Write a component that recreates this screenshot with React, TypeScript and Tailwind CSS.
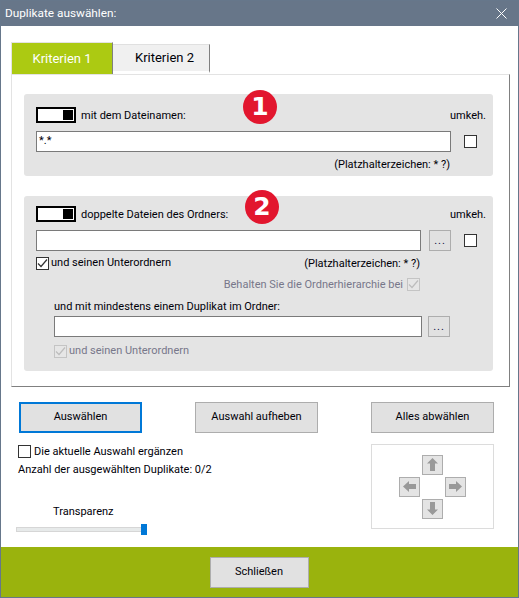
import type { ReactNode } from "react";

function Toggle() {
  return (
    <span className="flex h-4 w-10 shrink-0 items-center justify-end border-2 border-black bg-white pr-[1px]">
      <span className="h-[10px] w-[10px] bg-black" />
    </span>
  );
}

function Box({ checked, disabled, className = "" }: { checked?: boolean; disabled?: boolean; className?: string }) {
  return (
    <span className={`flex h-[13px] w-[13px] shrink-0 items-center justify-center border ${disabled ? "border-[#c4c4c4] bg-[#e6e6e6]" : "border-[#333] bg-white"} ${className}`}>
      {checked && (
        <svg width="11" height="11" viewBox="0 0 11 11" fill="none">
          <path d="M1 5.5 L4 8.5 L10 1.5" stroke={disabled ? "#bdbdbd" : "#333"} strokeWidth="1.2" />
        </svg>
      )}
    </span>
  );
}

function Input({ w, value }: { w: string; value?: string }) {
  return (
    <div className={`h-[21px] border border-[#7a7a7a] bg-white pl-[2px] leading-[17px] ${w}`}>{value}</div>
  );
}

function Dots() {
  return (
    <div className="flex h-[21px] w-[22px] items-center justify-center border border-[#adadad] bg-[#e1e1e1] pt-[2px] tracking-[1px] text-[#101040]">
      ...
    </div>
  );
}

function Badge({ n, className }: { n: string; className: string }) {
  return (
    <span className={`absolute flex h-[34px] w-[34px] items-center justify-center rounded-full bg-[#e2162e] font-['DejaVu_Sans',sans-serif] text-[25px] font-bold text-white ${className}`}>
      {n}
    </span>
  );
}

function Btn({ children, w, focused }: { children: ReactNode; w: string; focused?: boolean }) {
  return (
    <div className={`flex h-[31px] items-center justify-center bg-[#e1e1e1] ${focused ? "border-2 border-[#0078d7]" : "border border-[#adadad]"} ${w}`}>
      {children}
    </div>
  );
}

function Arrow({ d }: { d: string }) {
  return (
    <div className="flex h-5 w-[21px] items-center justify-center border border-[#adadad] bg-[#e4e4e4]">
      <svg width="15" height="15" viewBox="0 0 15 15">
        <path d={d} fill="#999999" />
      </svg>
    </div>
  );
}

export default function App() {
  return (
    <div className="flex h-[598px] w-[519px] flex-col overflow-hidden border border-[#66778b] bg-white font-['Roboto',sans-serif] text-[11px] text-[#000008]">
      <div className="flex h-[25px] shrink-0 items-center justify-between bg-[#677689] pl-[4px] pr-[11px] text-[11.8px] text-white">
        <span>Duplikate auswählen:</span>
        <svg width="11" height="11" viewBox="0 0 11 11" fill="none">
          <path d="M0.5 0.5 L10.5 10.5 M10.5 0.5 L0.5 10.5" stroke="#fff" strokeWidth="1" />
        </svg>
      </div>

      <div className="flex-1 pl-[10px] pt-[16px]">
        <div className="flex h-[32px] items-end text-[13px]">
          <div className="flex h-[32px] w-[102px] items-center justify-center border-l border-r border-t border-[#e3e3e3] border-r-[#808080] bg-[#acca12] text-white">
            Kriterien 1
          </div>
          <div className="mb-px flex h-[29px] w-[97px] items-center justify-center border-b-2 border-r border-t border-[#e0e0e0] border-b-white border-r-[#808080] bg-[#f0f0f0] pb-[1px] pl-[7px]">
            Kriterien 2
          </div>
        </div>

        <div className="h-[313px] w-[499px] border border-[#e3e3e3] border-b-[#808080] border-r-[#808080] px-[12px] pt-[19px]">
          <div className="relative h-[82px] w-[469px] rounded-[3px] bg-[#e4e4e4] pl-3 pr-[7px] pt-[13px]">
            <Badge n="1" className="left-[219px] top-[-4px]" />
            <div className="flex h-4 items-center gap-[5px]">
              <Toggle />
              <span className="flex-1 pt-[2px]">mit dem Dateinamen:</span>
              <span className="pt-[3px]">umkeh.</span>
            </div>
            <div className="mt-2 flex items-center">
              <Input w="w-[415px]" value="*.*" />
              <Box className="ml-[13px]" />
            </div>
            <div className="mt-[5px] pr-[36px] text-right">(Platzhalterzeichen: * ?)</div>
          </div>

          <div className="relative mt-5 h-[175px] w-[469px] rounded-[3px] bg-[#e4e4e4] pl-3 pr-[7px] pt-[10px]">
            <Badge n="2" className="left-[221px] top-[-6px]" />
            <div className="flex h-4 items-center gap-[5px]">
              <Toggle />
              <span className="flex-1 pt-[2px]">doppelte Dateien des Ordners:</span>
              <span className="pt-[2px]">umkeh.</span>
            </div>
            <div className="mt-2 flex items-center">
              <Input w="w-[385px]" />
              <div className="ml-2">
                <Dots />
              </div>
              <Box className="ml-[13px]" />
            </div>
            <div className="mt-[3px] flex h-[18px] items-center pr-[66px]">
              <Box checked />
              <span className="ml-[2px] flex-1 pt-px">und seinen Unterordnern</span>
              <span className="pt-[2px]">(Platzhalterzeichen: * ?)</span>
            </div>
            <div className="mt-[3px] flex h-[18px] items-center justify-end pr-[66px] text-[#77778a]">
              <span className="mr-[4px] pt-[2px]">Behalten Sie die Ordnerhierarchie bei</span>
              <Box checked disabled />
            </div>
            <div className="mt-[5px] pl-[18px]">
              <div className="leading-[18px]">und mit mindestens einem Duplikat im Ordner:</div>
              <div className="flex">
                <Input w="w-[368px]" />
                <div className="ml-[6px]">
                  <Dots />
                </div>
              </div>
              <div className="mt-[5px] flex h-[18px] items-center text-[#77778a]">
                <Box checked disabled />
                <span className="ml-[2px]">und seinen Unterordnern</span>
              </div>
            </div>
          </div>
        </div>

        <div className="mt-[15px] flex justify-between pl-2 pr-[24px]">
          <Btn w="w-[123px]" focused>Auswählen</Btn>
          <Btn w="w-[123px]">Auswahl aufheben</Btn>
          <Btn w="w-[123px]">Alles abwählen</Btn>
        </div>

        <div className="mt-[11px] flex justify-between pl-[7px] pr-[24px]">
          <div className="pt-[1px]">
            <div className="flex h-[13px] items-center">
              <Box />
              <span className="ml-[3px] pt-px">Die aktuelle Auswahl ergänzen</span>
            </div>
            <div className="mt-[3px] leading-[18px]">Anzahl der ausgewählten Duplikate: 0/2</div>
            <div className="mt-[24px] pl-[35px] leading-[18px]">Transparenz</div>
            <div className="relative ml-[-2px] mt-[6px] h-[5px] w-[131px] border border-[#d6d6d6] bg-[#e7eaea]">
              <span className="absolute left-[124px] top-[-4px] h-[11px] w-[6px] bg-[#0078d7]" />
            </div>
          </div>
          <div className="grid h-[85px] w-[123px] grid-cols-[21px_21px_21px] grid-rows-[20px_20px_20px] content-center justify-center gap-[2px] border border-[#dcdcdc]">
            <span />
            <Arrow d="M7.5 1 L13 6.5 H10 V14 H5 V6.5 H2 Z" />
            <span />
            <Arrow d="M1 7.5 L7 2 V5 H14 V10 H7 V13 Z" />
            <span />
            <Arrow d="M14 7.5 L8 2 V5 H1 V10 H8 V13 Z" />
            <span />
            <Arrow d="M7.5 14 L13 8.5 H10 V1 H5 V8.5 H2 Z" />
            <span />
          </div>
        </div>
      </div>

      <div className="flex h-[50px] shrink-0 items-center justify-center bg-[#9ab30d] pr-[1px]">
        <Btn w="w-[99px]">Schließen</Btn>
      </div>
    </div>
  );
}
